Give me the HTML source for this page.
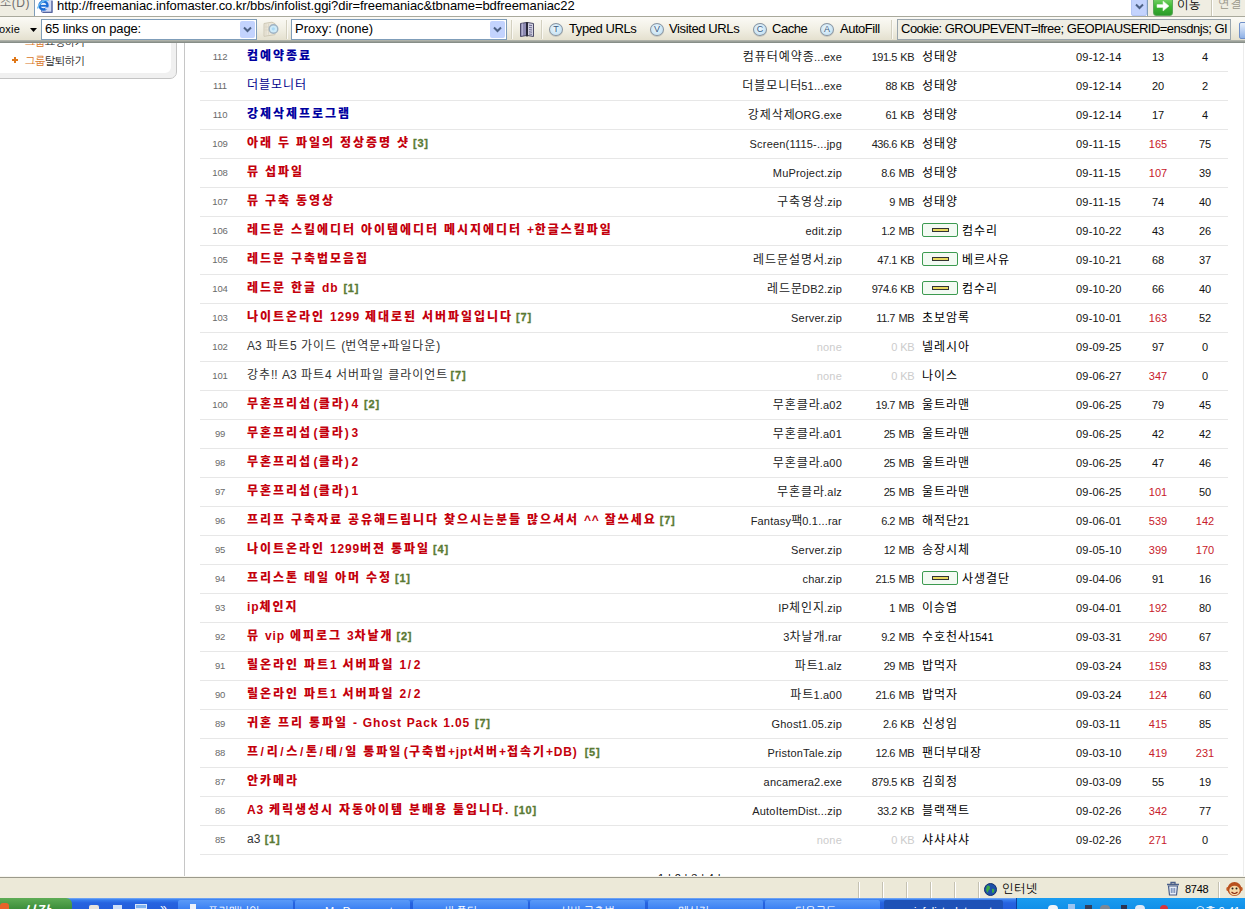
<!DOCTYPE html>
<html lang="ko">
<head>
<meta charset="utf-8">
<title>infolist</title>
<style>
html,body{margin:0;padding:0;}
body{width:1245px;height:909px;overflow:hidden;position:relative;background:#fff;font-family:"Liberation Sans","NanumGothic",sans-serif;font-size:12px;color:#000;}
.abs{position:absolute;}
/* ---------- address bar ---------- */
#addr{left:0;top:0;width:1245px;height:17px;background:#efede2;overflow:hidden;}
#addrlabel{left:0px;top:-4px;font-size:12px;color:#6e6e6e;white-space:nowrap;font-family:"Liberation Sans","NanumGothic",sans-serif;letter-spacing:0.5px;}
#addrbox{left:34px;top:-4px;width:1114px;height:21px;background:#fff;border:1px solid #7f9db9;box-sizing:border-box;}
#url{left:57px;top:-1px;font-size:13px;line-height:14px;white-space:nowrap;letter-spacing:-0.08px;color:#000;}
#ieico{left:37px;top:-2px;width:16px;height:16px;}
#adrop{left:1131px;top:-3px;width:16px;height:19px;background:#c3d3fd;border:1px solid #b4c6f5;box-sizing:border-box;border-radius:2px;}
#gobtn{left:1153px;top:-5px;width:20px;height:21px;border-radius:3px;background:linear-gradient(#8fdc7c,#3db834 55%,#2c9a2a);border:1px solid #5aa85a;box-sizing:border-box;}
#gotxt{left:1177px;top:-2px;font-size:12px;line-height:14px;letter-spacing:0.7px;font-family:"Liberation Sans","NanumGothic",sans-serif;}
#asep{left:1211px;top:0;width:1px;height:16px;background:#c9c6b6;border-right:1px solid #fff;}
#lnk{left:1218px;top:-3px;font-size:12px;line-height:14px;letter-spacing:0.7px;color:#9a978a;font-family:"Liberation Sans","NanumGothic",sans-serif;}
/* ---------- toolbar 2 ---------- */
#tb2{left:0;top:16px;width:1245px;height:25px;background:linear-gradient(#fbfaf6,#f1efe4 50%,#e3dfcd);border-top:1px solid #a9a99c;box-sizing:border-box;}
#tbline{left:0;top:40px;width:1245px;height:3px;background:linear-gradient(#b9bbb2,#7d8580);}
.combo{background:#fff;border:1px solid #7f9db9;box-sizing:border-box;height:21px;top:19px;box-shadow:0 1px 0 #dcdad0;}
.cbtn{width:15px;height:17px;top:21px;background:#c3d3fd;border-radius:2px;}
.cbtn svg,#adrop svg{position:absolute;left:3px;top:5px;}
.tbtxt{top:22px;font-size:13px;line-height:14px;white-space:nowrap;color:#000;}
.sep{top:20px;width:1px;height:19px;background:#d3d0c0;border-right:1px solid #faf9f4;}
.circ{top:23px;width:14px;height:13px;box-sizing:border-box;border-radius:50%;border:1.5px solid #8793a0;background:radial-gradient(circle at 45% 40%,#eef8fd,#cde6f5 60%,#b4d4e8);font-size:9px;line-height:10px;text-align:center;color:#3c5c80;box-shadow:0 1px 0 #c9c9c0;}
#cookie{left:897px;top:19px;width:334px;height:21px;background:#efeee4;border:1px solid #9aa5ad;box-sizing:border-box;}
/* ---------- page ---------- */
#page{left:0;top:43px;width:1245px;height:833px;background:#fff;overflow:hidden;}
#lp{left:-10px;top:-20px;width:187px;height:56px;box-sizing:border-box;border:1px solid #c4c4c4;border-radius:7px;box-shadow:inset -5px -5px 0 #f0f0f0;}
.lpt{left:25px;font-family:"Liberation Sans","NanumGothic",sans-serif;font-size:11px;line-height:14px;letter-spacing:-0.45px;color:#222;white-space:nowrap;}
.lpt b{font-weight:normal;color:#d9761e;}
.plus{left:12px;width:6px;height:6px;}
.plus:before,.plus:after{content:"";position:absolute;background:#e07818;}
.plus:before{left:0;top:2px;width:6px;height:2px;}
.plus:after{left:2px;top:0;width:2px;height:6px;}
#cleft{left:184px;top:0;width:1px;height:834px;background:#c6c6c6;}
#pager{left:657px;top:828px;font-size:11px;line-height:14px;color:#111;white-space:nowrap;}
#pager span{display:inline-block;width:8.3px;text-align:center;}
#rowsbox{left:200px;top:0;width:1028px;}
.row{position:relative;height:28px;border-bottom:1px solid #e7e7e7;white-space:nowrap;}
.row span{position:absolute;top:0;line-height:28px;}
.no{left:0;width:40px;text-align:center;font-size:9.5px;letter-spacing:-0.2px;color:#6a6a6a;top:0px !important;}
.t{left:47px;font-size:12px;top:-1px !important;}
.t span{position:static !important;}
.bn,.br{font-family:"Liberation Sans","Noto Sans CJK KR",sans-serif;font-weight:900;font-size:12px;letter-spacing:1.96px;word-spacing:-0.3px;}
.bn .l,.br .l{letter-spacing:0.85px;font-weight:bold;font-size:12px;}
.bn .p,.br .p{letter-spacing:2.8px;font-weight:bold;font-size:12px;}
.br .po{margin-left:1.5px;letter-spacing:1.2px;}
.br .ps{margin-left:0.6px;letter-spacing:2.7px;}
.bn{color:#0000a0;}
.br{color:#c4000c;}
.nn,.ng{font-family:"Liberation Sans","Noto Sans CJK KR",sans-serif;letter-spacing:0.96px;}
.nn .l,.ng .l{letter-spacing:0;}
.nn{color:#00008c;}
.ng{color:#333;}
.cm{margin-left:0;font-family:"Liberation Sans",sans-serif;font-size:11px;font-weight:bold;color:#5a7a34;letter-spacing:0.8px;-webkit-text-stroke:0.3px #5a7a34;}
.fn{right:386px;font-size:11px;color:#222;text-align:right;letter-spacing:0.2px;}
.k{position:static !important;font-family:"Liberation Sans","Noto Sans CJK KR",sans-serif;font-size:12px;letter-spacing:0.96px;margin-right:-0.9px;}
.sz{right:314px;font-size:11px;color:#222;text-align:right;letter-spacing:-0.5px;word-spacing:1px;}
.none{color:#ccc !important;}
.au{left:722px;font-size:11px;color:#000;}
.dt{left:876px;font-size:11px;color:#111;letter-spacing:0.2px;}
.c1{left:938px;width:40px;text-align:center;font-size:11px;color:#111;}
.c2{left:985px;width:40px;text-align:center;font-size:11px;color:#111;}
.r{color:#c8202a !important;}
.bd{display:inline-block;position:relative;width:34px;height:12px;border:1px solid #3c9a50;border-radius:2px;background:#f3faf3;vertical-align:-2px;margin-right:4px;}
.bd i{position:absolute;left:9px;top:4px;width:15px;height:2px;border:1px solid #333;background:#e8d860;}
.cmh{margin-left:-2px;}
/* ---------- status bar ---------- */
#status{left:0;top:876px;width:1245px;height:22px;background:#ece9d8;border-top:1px solid #f8f7f0;box-sizing:border-box;}
#pgbot{left:0;top:877px;width:1245px;height:1px;background:#9c9a8c;z-index:2;}
.ssep{top:882px;width:1px;height:16px;background:#c5c2b2;border-right:1px solid #fff;}
.stxt{top:882px;font-size:12px;line-height:14px;white-space:nowrap;color:#000;font-family:"Liberation Sans","NanumGothic",sans-serif;}
#task{left:0;top:898px;width:1245px;height:11px;background:linear-gradient(#7fb0f5,#3a80f0 15%,#2663e0 45%,#245edb);}
#start{left:0;top:898px;width:72px;height:11px;background:linear-gradient(#5eac56,#3c8e3a);border-radius:0 6px 0 0;}
.tk{top:900px;height:9px;width:115px;background:linear-gradient(#5a9af8,#3c81f3);border-radius:2px 2px 0 0;}
.tk.on{background:#1e52b7;}
.tkt{top:905px;font-size:11px;line-height:12px;color:#fff;white-space:nowrap;font-family:"Liberation Sans","NanumGothic",sans-serif;}
#tray{left:1016px;top:898px;width:229px;height:11px;background:linear-gradient(#1a9cf0,#1290e8);border-left:1px solid #0d3f9c;}
</style>
</head>
<body>
<div id="addr" class="abs">
  <div id="addrlabel" class="abs">소(D)</div>
  <div id="addrbox" class="abs"></div>
  <svg id="ieico" class="abs" viewBox="0 0 16 16"><path d="M4.5 0h8l2.5 2.5V14H4.5z" fill="#d3dbf3" stroke="#7f8fc2" stroke-width="1"/><path d="M15 3v11.5H5.5" fill="none" stroke="#56669f" stroke-width="1.2"/><circle cx="6.5" cy="7.5" r="4" fill="#eaf3fd" stroke="#1c6ed6" stroke-width="2.4"/><path d="M2.6 7.8h8" stroke="#1c6ed6" stroke-width="1.8"/><path d="M8.3 9.4h3.5v2H8.3z" fill="#d3dbf3"/><path d="M0.5 10.5C1.5 5.5 7 1 12 2.2" fill="none" stroke="#6fc0f2" stroke-width="1.3"/></svg>
  <div id="url" class="abs">http://freemaniac.infomaster.co.kr/bbs/infolist.ggi?dir=freemaniac&amp;tbname=bdfreemaniac22</div>
  <div id="adrop" class="abs"><svg width="9" height="7" viewBox="0 0 9 7"><path d="M1 1.5 L4.5 5 L8 1.5" fill="none" stroke="#4d6185" stroke-width="2"/></svg></div>
  <div id="gobtn" class="abs"><svg width="18" height="18" viewBox="0 0 18 18"><path d="M3 8.5h6V5l6 5-6 5v-3.5H3z" fill="#fff" stroke="#d8f0d0" stroke-width="0.6"/></svg></div>
  <div id="gotxt" class="abs">이동</div>
  <div id="asep" class="abs"></div>
  <div id="lnk" class="abs">연결</div>
</div>
<div id="tb2" class="abs"></div>
<div class="abs tbtxt" style="left:-1px;font-size:11px;letter-spacing:0.2px;">oxie</div>
<svg class="abs" style="left:30px;top:28px" width="7" height="4" viewBox="0 0 7 4"><path d="M0 0h7L3.5 4z" fill="#000"/></svg>
<div class="abs combo" style="left:41px;width:216px;"></div>
<div class="abs tbtxt" style="left:45px;letter-spacing:-0.13px;">65 links on page:</div>
<div class="abs cbtn" style="left:240px;"><svg width="9" height="7" viewBox="0 0 9 7"><path d="M1 1.5 L4.5 5 L8 1.5" fill="none" stroke="#4d6185" stroke-width="2"/></svg></div>
<svg class="abs" style="left:262px;top:20px" width="19" height="18" viewBox="0 0 19 18"><path d="M2 3.5l8-1.3 3 1.5v11l-11 1.6z" fill="#ebe7da" stroke="#cfc9b6"/><path d="M4 4v11M6.5 3.7v11M2.5 7h7M2.5 10h7" stroke="#d9d4c4" stroke-width="0.8"/><circle cx="11.5" cy="9" r="4.3" fill="#cdeaf8" stroke="#9fb2c2" stroke-width="1.4"/><circle cx="11.3" cy="8.8" r="1.6" fill="#a9d8f4"/></svg>
<div class="abs sep" style="left:286px;"></div>
<div class="abs combo" style="left:291px;width:216px;"></div>
<div class="abs tbtxt" style="left:295px;letter-spacing:0;">Proxy: (none)</div>
<div class="abs cbtn" style="left:490px;"><svg width="9" height="7" viewBox="0 0 9 7"><path d="M1 1.5 L4.5 5 L8 1.5" fill="none" stroke="#4d6185" stroke-width="2"/></svg></div>
<div class="abs sep" style="left:511px;"></div>
<svg class="abs" style="left:519px;top:21px" width="16" height="17" viewBox="0 0 16 17"><path d="M1.5 2.5l6-1v13l-6 1z" fill="#8d8ab2" stroke="#4b4a66"/><path d="M3.3 2.6v12" stroke="#b9b7d4" stroke-width="1.2"/><path d="M8.5 1.5l6 1v13l-6-1z" fill="#d2d1e2" stroke="#4b4a66"/><path d="M10 4.2l3 .4M10 6.4l3 .4M10 8.6l3 .4M10 10.8l3 .4M10 13l3 .4" stroke="#6f6d92" stroke-width="1"/><path d="M8 1v14.5" stroke="#1f1f2c" stroke-width="1.6"/></svg>
<div class="abs sep" style="left:541px;"></div>
<div class="abs circ" style="left:549px;">T</div>
<div class="abs tbtxt" style="left:569px;letter-spacing:-0.41px;">Typed URLs</div>
<div class="abs circ" style="left:650px;">V</div>
<div class="abs tbtxt" style="left:669px;letter-spacing:-0.38px;">Visited URLs</div>
<div class="abs circ" style="left:753px;">C</div>
<div class="abs tbtxt" style="left:772px;letter-spacing:-0.44px;">Cache</div>
<div class="abs circ" style="left:820px;">A</div>
<div class="abs tbtxt" style="left:840px;letter-spacing:-0.47px;">AutoFill</div>
<div class="abs sep" style="left:891px;"></div>
<div id="cookie" class="abs"></div>
<div class="abs tbtxt" style="left:901px;letter-spacing:-0.5px;">Cookie: GROUPEVENT=lfree; GEOPIAUSERID=ensdnjs; GI</div>
<div class="abs" style="left:1239px;top:22px;width:8px;height:15px;background:linear-gradient(#e8f0fb,#8fb1e6);border:1px solid #6f8fc8;border-radius:2px;"></div>
<div id="tbline" class="abs"></div>
<div id="page" class="abs">
  <div id="lp" class="abs"></div>
  <div class="abs lpt" style="top:-8px;"><b>그룹</b>요청하기</div>
  <div class="abs plus" style="top:14px;"></div>
  <div class="abs lpt" style="top:11px;"><b>그룹</b>탈퇴하기</div>
  <div id="cleft" class="abs"></div>
  <div class="abs" style="left:1243px;top:0;width:1px;height:833px;background:#ececec;"></div>
  <div id="pager" class="abs"><span>1</span><span>|</span><span>2</span><span>|</span><span>3</span><span>|</span><span>4</span><span>|</span></div>
  <div id="rowsbox" class="abs">
<div class="row"><span class="no">112</span><span class="t bn">컴예약종료</span><span class="fn"><span class="k">컴퓨터예약종</span>...exe</span><span class="sz">191.5 KB</span><span class="au"><span class="k">성태양</span></span><span class="dt">09-12-14</span><span class="c1">13</span><span class="c2">4</span></div>
<div class="row"><span class="no">111</span><span class="t nn">더블모니터</span><span class="fn"><span class="k">더블모니터</span>51...exe</span><span class="sz">88 KB</span><span class="au"><span class="k">성태양</span></span><span class="dt">09-12-14</span><span class="c1">20</span><span class="c2">2</span></div>
<div class="row"><span class="no">110</span><span class="t bn">강제삭제프로그램</span><span class="fn"><span class="k">강제삭제</span>ORG.exe</span><span class="sz">61 KB</span><span class="au"><span class="k">성태양</span></span><span class="dt">09-12-14</span><span class="c1">17</span><span class="c2">4</span></div>
<div class="row"><span class="no">109</span><span class="t br">아래 두 파일의 정상증명 샷 <span class="cm cmh">[3]</span></span><span class="fn">Screen(1115-...jpg</span><span class="sz">436.6 KB</span><span class="au"><span class="k">성태양</span></span><span class="dt">09-11-15</span><span class="c1 r">165</span><span class="c2">75</span></div>
<div class="row"><span class="no">108</span><span class="t br">뮤 섭파일</span><span class="fn">MuProject.zip</span><span class="sz">8.6 MB</span><span class="au"><span class="k">성태양</span></span><span class="dt">09-11-15</span><span class="c1 r">107</span><span class="c2">39</span></div>
<div class="row"><span class="no">107</span><span class="t br">뮤 구축 동영상</span><span class="fn"><span class="k">구축영상</span>.zip</span><span class="sz">9 MB</span><span class="au"><span class="k">성태양</span></span><span class="dt">09-11-15</span><span class="c1">74</span><span class="c2">40</span></div>
<div class="row"><span class="no">106</span><span class="t br">레드문 스킬에디터 아이템에디터 메시지에디터 <span class="l">+</span>한글스킬파일</span><span class="fn">edit.zip</span><span class="sz">1.2 MB</span><span class="au"><i class="bd"><i></i></i><span class="k">컴수리</span></span><span class="dt">09-10-22</span><span class="c1">43</span><span class="c2">26</span></div>
<div class="row"><span class="no">105</span><span class="t br">레드문 구축법모음집</span><span class="fn"><span class="k">레드문설명서</span>.zip</span><span class="sz">47.1 KB</span><span class="au"><i class="bd"><i></i></i><span class="k">베르사유</span></span><span class="dt">09-10-21</span><span class="c1">68</span><span class="c2">37</span></div>
<div class="row"><span class="no">104</span><span class="t br">레드문 한글 <span class="l">db</span> <span class="cm">[1]</span></span><span class="fn"><span class="k">레드문</span>DB2.zip</span><span class="sz">974.6 KB</span><span class="au"><i class="bd"><i></i></i><span class="k">컴수리</span></span><span class="dt">09-10-20</span><span class="c1">66</span><span class="c2">40</span></div>
<div class="row"><span class="no">103</span><span class="t br">나이트온라인 <span class="l">1299</span> 제대로된 서버파일입니다 <span class="cm cmh">[7]</span></span><span class="fn">Server.zip</span><span class="sz">11.7 MB</span><span class="au"><span class="k">초보암록</span></span><span class="dt">09-10-01</span><span class="c1 r">163</span><span class="c2">52</span></div>
<div class="row"><span class="no">102</span><span class="t ng"><span class="l">A3</span> 파트<span class="l">5</span> 가이드 <span class="l"><span class="po">(</span></span>번역문<span class="l">+</span>파일다운<span class="l"><span class="p">)</span></span></span><span class="fn none">none</span><span class="sz none">0 KB</span><span class="au"><span class="k">넬레시아</span></span><span class="dt">09-09-25</span><span class="c1">97</span><span class="c2">0</span></div>
<div class="row"><span class="no">101</span><span class="t ng">강추<span class="l">!!</span> <span class="l">A3</span> 파트<span class="l">4</span> 서버파일 클라이언트 <span class="cm cmh">[7]</span></span><span class="fn none">none</span><span class="sz none">0 KB</span><span class="au"><span class="k">나이스</span></span><span class="dt">09-06-27</span><span class="c1 r">347</span><span class="c2">0</span></div>
<div class="row"><span class="no">100</span><span class="t br">무혼프리섭<span class="l"><span class="po">(</span></span>클라<span class="l"><span class="p">)</span>4</span> <span class="cm">[2]</span></span><span class="fn"><span class="k">무혼클라</span>.a02</span><span class="sz">19.7 MB</span><span class="au"><span class="k">울트라맨</span></span><span class="dt">09-06-25</span><span class="c1">79</span><span class="c2">45</span></div>
<div class="row"><span class="no">99</span><span class="t br">무혼프리섭<span class="l"><span class="po">(</span></span>클라<span class="l"><span class="p">)</span>3</span></span><span class="fn"><span class="k">무혼클라</span>.a01</span><span class="sz">25 MB</span><span class="au"><span class="k">울트라맨</span></span><span class="dt">09-06-25</span><span class="c1">42</span><span class="c2">42</span></div>
<div class="row"><span class="no">98</span><span class="t br">무혼프리섭<span class="l"><span class="po">(</span></span>클라<span class="l"><span class="p">)</span>2</span></span><span class="fn"><span class="k">무혼클라</span>.a00</span><span class="sz">25 MB</span><span class="au"><span class="k">울트라맨</span></span><span class="dt">09-06-25</span><span class="c1">47</span><span class="c2">46</span></div>
<div class="row"><span class="no">97</span><span class="t br">무혼프리섭<span class="l"><span class="po">(</span></span>클라<span class="l"><span class="p">)</span>1</span></span><span class="fn"><span class="k">무혼클라</span>.alz</span><span class="sz">25 MB</span><span class="au"><span class="k">울트라맨</span></span><span class="dt">09-06-25</span><span class="c1 r">101</span><span class="c2">50</span></div>
<div class="row"><span class="no">96</span><span class="t br">프리프 구축자료 공유해드림니다 찾으시는분들 많으셔서 <span class="l">^^</span> 잘쓰세요 <span class="cm cmh">[7]</span></span><span class="fn">Fantasy<span class="k">팩</span>0.1...rar</span><span class="sz">6.2 MB</span><span class="au"><span class="k">해적단</span>21</span><span class="dt">09-06-01</span><span class="c1 r">539</span><span class="c2 r">142</span></div>
<div class="row"><span class="no">95</span><span class="t br">나이트온라인 <span class="l">1299</span>버젼 통파일 <span class="cm cmh">[4]</span></span><span class="fn">Server.zip</span><span class="sz">12 MB</span><span class="au"><span class="k">송장시체</span></span><span class="dt">09-05-10</span><span class="c1 r">399</span><span class="c2 r">170</span></div>
<div class="row"><span class="no">94</span><span class="t br">프리스톤 테일 아머 수정 <span class="cm cmh">[1]</span></span><span class="fn">char.zip</span><span class="sz">21.5 MB</span><span class="au"><i class="bd"><i></i></i><span class="k">사생결단</span></span><span class="dt">09-04-06</span><span class="c1">91</span><span class="c2">16</span></div>
<div class="row"><span class="no">93</span><span class="t br"><span class="l">ip</span>체인지</span><span class="fn">IP<span class="k">체인지</span>.zip</span><span class="sz">1 MB</span><span class="au"><span class="k">이승엽</span></span><span class="dt">09-04-01</span><span class="c1 r">192</span><span class="c2">80</span></div>
<div class="row"><span class="no">92</span><span class="t br">뮤 <span class="l">vip</span> 에피로그 <span class="l">3</span>차날개 <span class="cm cmh">[2]</span></span><span class="fn">3<span class="k">차날개</span>.rar</span><span class="sz">9.2 MB</span><span class="au"><span class="k">수호천사</span>1541</span><span class="dt">09-03-31</span><span class="c1 r">290</span><span class="c2">67</span></div>
<div class="row"><span class="no">91</span><span class="t br">릴온라인 파트<span class="l">1</span> 서버파일 <span class="l">1<span class="ps">/</span>2</span></span><span class="fn"><span class="k">파트</span>1.alz</span><span class="sz">29 MB</span><span class="au"><span class="k">밥먹자</span></span><span class="dt">09-03-24</span><span class="c1 r">159</span><span class="c2">83</span></div>
<div class="row"><span class="no">90</span><span class="t br">릴온라인 파트<span class="l">1</span> 서버파일 <span class="l">2<span class="ps">/</span>2</span></span><span class="fn"><span class="k">파트</span>1.a00</span><span class="sz">21.6 MB</span><span class="au"><span class="k">밥먹자</span></span><span class="dt">09-03-24</span><span class="c1 r">124</span><span class="c2">60</span></div>
<div class="row"><span class="no">89</span><span class="t br">귀혼 프리 통파일 <span class="l">-</span> <span class="l">Ghost</span> <span class="l">Pack</span> <span class="l">1.05</span> <span class="cm">[7]</span></span><span class="fn">Ghost1.05.zip</span><span class="sz">2.6 KB</span><span class="au"><span class="k">신성임</span></span><span class="dt">09-03-11</span><span class="c1 r">415</span><span class="c2">85</span></div>
<div class="row"><span class="no">88</span><span class="t br">프<span class="l"><span class="ps">/</span></span>리<span class="l"><span class="ps">/</span></span>스<span class="l"><span class="ps">/</span></span>톤<span class="l"><span class="ps">/</span></span>테<span class="l"><span class="ps">/</span></span>일 통파일<span class="l"><span class="po">(</span></span>구축법<span class="l">+jpt</span>서버<span class="l">+</span>접속기<span class="l">+DB<span class="p">)</span></span> <span class="cm">[5]</span></span><span class="fn">PristonTale.zip</span><span class="sz">12.6 MB</span><span class="au"><span class="k">팬더부대장</span></span><span class="dt">09-03-10</span><span class="c1 r">419</span><span class="c2 r">231</span></div>
<div class="row"><span class="no">87</span><span class="t br">안카메라</span><span class="fn">ancamera2.exe</span><span class="sz">879.5 KB</span><span class="au"><span class="k">김희정</span></span><span class="dt">09-03-09</span><span class="c1">55</span><span class="c2">19</span></div>
<div class="row"><span class="no">86</span><span class="t br"><span class="l">A3</span> 케릭생성시 자동아이템 분배용 툴입니다<span class="l">.</span> <span class="cm">[10]</span></span><span class="fn">AutoItemDist...zip</span><span class="sz">33.2 KB</span><span class="au"><span class="k">블랙잭트</span></span><span class="dt">09-02-26</span><span class="c1 r">342</span><span class="c2">77</span></div>
<div class="row"><span class="no">85</span><span class="t ng"><span class="l">a3</span> <span class="cm">[1]</span></span><span class="fn none">none</span><span class="sz none">0 KB</span><span class="au"><span class="k">샤샤샤샤</span></span><span class="dt">09-02-26</span><span class="c1 r">271</span><span class="c2">0</span></div>
  </div>
</div>
<div id="pgbot" class="abs"></div>
<div id="status" class="abs"></div>
<div class="abs ssep" style="left:858px"></div><div class="abs ssep" style="left:882px"></div><div class="abs ssep" style="left:906px"></div><div class="abs ssep" style="left:930px"></div><div class="abs ssep" style="left:954px"></div><div class="abs ssep" style="left:978px"></div>
<svg class="abs" style="left:984px;top:883px" width="13" height="13" viewBox="0 0 13 13"><circle cx="6.5" cy="6.5" r="6" fill="#1d4fa8" stroke="#12306a"/><path d="M3 3c2-1 3 0 3 2s-2 2-2 4-2-1-2-3zM8 6c2-1 3 1 2 3s-2 1-2-1z" fill="#3aa845"/></svg>
<div class="abs stxt" style="left:1002px;letter-spacing:0.7px;">인터넷</div>
<svg class="abs" style="left:1166px;top:881px" width="14" height="15" viewBox="0 0 14 15"><path d="M1 3.5h12M5 3.5v-2h4v2" fill="none" stroke="#4a5f8a" stroke-width="1.3"/><path d="M2.5 5h9l-1 9h-7z" fill="#e6edf8" stroke="#4a5f8a" stroke-width="1.2"/><path d="M5.3 7v5M7 7v5M8.7 7v5" stroke="#6f86b3"/></svg>
<div class="abs stxt" style="left:1185px;font-size:11px;letter-spacing:-0.3px;">8748</div>
<div class="abs ssep" style="left:1218px"></div>
<svg class="abs" style="left:1226px;top:881px" width="17" height="16" viewBox="0 0 17 16"><circle cx="2.5" cy="8" r="2.3" fill="#c8642a"/><circle cx="14.5" cy="8" r="2.3" fill="#c8642a"/><circle cx="8.5" cy="8" r="7" fill="#b8501e"/><ellipse cx="8.5" cy="9.5" rx="5.2" ry="4.8" fill="#f6d9a8"/><circle cx="6.5" cy="7.5" r="1" fill="#222"/><circle cx="10.5" cy="7.5" r="1" fill="#222"/><path d="M5.5 11c2 2 4 2 6 0" fill="none" stroke="#8a2a10" stroke-width="1.1"/></svg>
<div id="task" class="abs"></div>
<div id="start" class="abs"></div>
<div class="abs tk" style="left:178px"></div><div class="abs tk" style="left:295px"></div><div class="abs tk" style="left:413px"></div><div class="abs tk" style="left:530px"></div><div class="abs tk" style="left:648px"></div><div class="abs tk" style="left:765px"></div><div class="abs tk on" style="left:884px;width:119px"></div>
<div id="tray" class="abs"></div>
<div class="abs tkt" style="left:21px;font-size:15px;font-weight:bold;font-style:italic;top:906px;">시작</div>
<div class="abs tkt" style="left:208px;">프리매니악</div>
<div class="abs tkt" style="left:325px;">My Documents</div>
<div class="abs tkt" style="left:443px;">새 폴더</div>
<div class="abs tkt" style="left:560px;">서버 구축법</div>
<div class="abs tkt" style="left:678px;">메신저</div>
<div class="abs tkt" style="left:795px;">다운로드</div>
<div class="abs tkt" style="left:914px;">infolist - Internet</div>
<div class="abs tkt" style="left:1195px;">오후 9:41</div>
<div class="abs" style="left:0;top:903px;width:9px;height:6px;background:#e8622a;border-radius:3px 3px 0 0;"></div>
<div class="abs" style="left:1048px;top:905px;width:10px;height:4px;background:#f2f4f8;border-radius:5px 5px 0 0;"></div>
<div class="abs" style="left:1068px;top:904px;width:7px;height:5px;background:#9cc4f0;"></div>
<div class="abs" style="left:1085px;top:905px;width:7px;height:4px;background:#34405c;"></div>
<div class="abs" style="left:1100px;top:905px;width:10px;height:4px;background:#7d8896;border-radius:5px 5px 0 0;"></div>
<div class="abs" style="left:1121px;top:905px;width:6px;height:4px;background:#2b3350;"></div>
<div class="abs" style="left:1135px;top:905px;width:10px;height:4px;background:#dfe8f6;border-radius:5px 5px 0 0;"></div>
<div class="abs" style="left:1160px;top:905px;width:8px;height:4px;background:#d8343a;border-radius:4px 4px 0 0;"></div>
<div class="abs" style="left:190px;top:904px;width:6px;height:5px;background:#eef2fa;"></div>
<div class="abs" style="left:89px;top:905px;width:10px;height:4px;background:#e9e4dc;border-radius:2px 2px 0 0;"></div>
<div class="abs" style="left:113px;top:905px;width:9px;height:4px;background:#cfe0f8;"></div>
<div class="abs" style="left:135px;top:904px;width:12px;height:5px;background:#7fb2ee;border:1px solid #dbe8fa;box-sizing:border-box;"></div>
<div class="abs tkt" style="left:160px;top:902px;font-size:12px;">»</div>
</body>
</html>
